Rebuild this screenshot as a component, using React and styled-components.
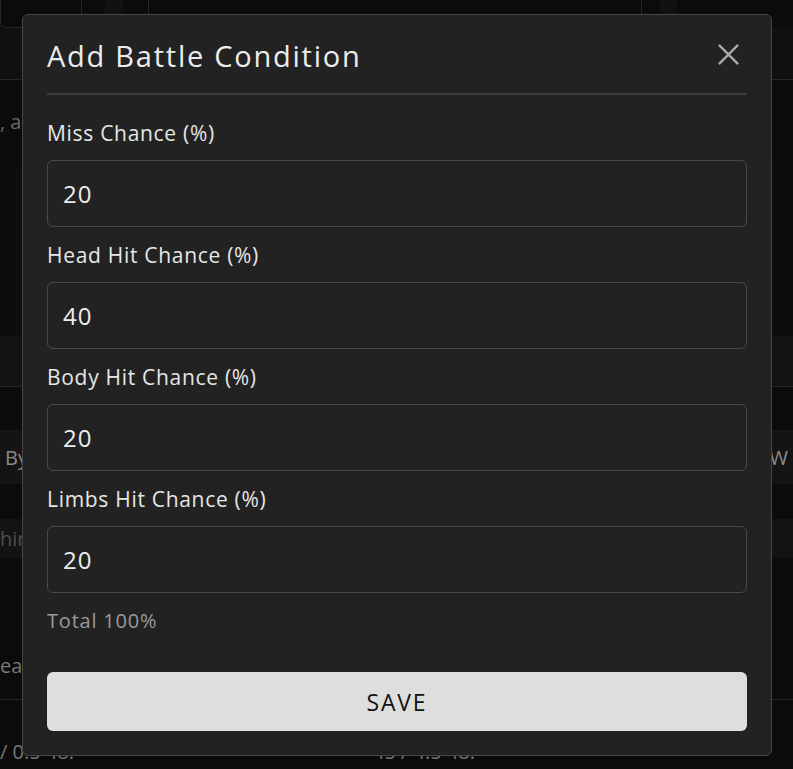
import styled, { createGlobalStyle } from 'styled-components'

const GlobalStyle = createGlobalStyle`
  html, body {
    margin: 0;
    padding: 0;
    background: #0b0b0b;
    font-family: 'Open Sans', 'Liberation Sans', sans-serif;
    overflow: hidden;
  }
`

const Page = styled.div`
  width: 793px;
  height: 769px;
  display: flex;
  flex-direction: column;
  background: #0b0b0b;
  color: #777;
`

const TopRow = styled.div`
  height: 28px;
  display: flex;
`

const TopCard = styled.div`
  width: ${({ w }) => w}px;
  margin-left: ${({ ml }) => ml || 0}px;
  border: 1px solid #262626;
  border-top: none;
  border-radius: 0 0 6px 6px;
  box-sizing: border-box;
`

const Strip = styled.div`
  width: ${({ w }) => w}px;
  margin-left: ${({ ml }) => ml || 0}px;
  background: #111;
`

const Band = styled.div`
  height: ${({ h }) => h}px;
  background: ${({ bg }) => bg || '#0b0b0b'};
  border-bottom: ${({ line }) => (line ? '1px solid #262626' : 'none')};
  display: flex;
  align-items: ${({ align }) => align || 'center'};
  justify-content: space-between;
  padding: 0 ${({ px }) => px ?? 4}px;
  font-size: 20px;
  color: ${({ fg }) => fg || '#6a6a6a'};
  white-space: nowrap;
  overflow: hidden;
`

const FootText = styled.span`
  margin-top: 38px;
  margin-right: ${({ mr }) => mr || 0}px;
`

const Overlay = styled.div`
  position: fixed;
  inset: 0;
  display: flex;
  justify-content: flex-start;
  align-items: flex-start;
  padding: 14px 0 0 22px;
`

const Modal = styled.div`
  width: 750px;
  height: 742px;
  box-sizing: border-box;
  background: #222;
  border: 1px solid #464646;
  border-radius: 6px;
  padding: 24px;
  display: flex;
  flex-direction: column;
  color: #eaeaea;
`

const Header = styled.div`
  display: flex;
  justify-content: space-between;
  align-items: center;
  padding-bottom: 20px;
  border-bottom: 2px solid #3c3c3c;
`

const Title = styled.h2`
  margin: 0;
  font-size: 29px;
  line-height: 34px;
  font-weight: 400;
  letter-spacing: 1.75px;
  color: #ececec;
`

const CloseButton = styled.button`
  background: none;
  border: none;
  padding: 0;
  margin: 0 7px 4px 0;
  width: 24px;
  height: 24px;
  display: flex;
  align-items: center;
  justify-content: center;
  cursor: pointer;
  color: #aaa;
`

const Form = styled.div`
  display: flex;
  flex-direction: column;
  gap: 16px;
  padding-top: 26px;
`

const Field = styled.div`
  display: flex;
  flex-direction: column;
`

const Label = styled.label`
  font-size: 21px;
  line-height: 24px;
  letter-spacing: 0.7px;
  margin-bottom: 15px;
  color: #e6e6e6;
`

const Input = styled.input`
  height: 67px;
  box-sizing: border-box;
  background: #222;
  border: 1px solid #4a4a4a;
  border-radius: 6px;
  padding: 0 15px;
  font-family: inherit;
  font-size: 24px;
  letter-spacing: 1px;
  color: #ececec;
  outline: none;
`

const Total = styled.div`
  font-size: 20px;
  line-height: 24px;
  letter-spacing: 0.8px;
  color: #9a9a9a;
`

const SaveButton = styled.button`
  margin-top: auto;
  height: 59px;
  border: none;
  border-radius: 6px;
  background: #dedede;
  color: #111;
  font-family: inherit;
  font-size: 23px;
  letter-spacing: 1.8px;
  cursor: pointer;
`

const fields = [
  { label: 'Miss Chance (%)', value: '20' },
  { label: 'Head Hit Chance (%)', value: '40' },
  { label: 'Body Hit Chance (%)', value: '20' },
  { label: 'Limbs Hit Chance (%)', value: '20' },
]

export default function App() {
  return (
    <>
      <GlobalStyle />
      <Page>
        <TopRow>
          <TopCard w={82} />
          <Strip w={18} ml={23} />
          <TopCard w={494} ml={25} />
          <Strip w={17} ml={18} />
        </TopRow>
        <Band h={52} bg="#101010" line />
        <Band h={84} px={0}>
          <span>, a</span>
        </Band>
        <Band h={175} bg="#0d0d0d" />
        <Band h={51} bg="#121212" line />
        <Band h={43} />
        <Band h={55} bg="#141414" fg="#8a8a8a" px={5}>
          <span>By</span>
          <span>W</span>
        </Band>
        <Band h={35} />
        <Band h={40} bg="#131313" fg="#4e4e4e" px={0}>
          <span>hir</span>
        </Band>
        <Band h={75} />
        <Band h={67} fg="#777" px={0} line>
          <span>ead</span>
        </Band>
        <Band h={70} fg="#777" px={0} align="flex-start">
          <FootText>/ 0.5 48.</FootText>
          <FootText mr={318}>45 / 4.5 48.</FootText>
        </Band>
      </Page>
      <Overlay>
        <Modal>
          <Header>
            <Title>Add Battle Condition</Title>
            <CloseButton aria-label="close">
              <svg width="23" height="23" viewBox="0 0 24 24" fill="none" stroke="currentColor" strokeWidth="2.4">
                <path d="M2 2 L22 22 M22 2 L2 22" />
              </svg>
            </CloseButton>
          </Header>
          <Form>
            {fields.map((f) => (
              <Field key={f.label}>
                <Label>{f.label}</Label>
                <Input defaultValue={f.value} />
              </Field>
            ))}
            <Total>Total 100%</Total>
          </Form>
          <SaveButton>SAVE</SaveButton>
        </Modal>
      </Overlay>
    </>
  )
}
